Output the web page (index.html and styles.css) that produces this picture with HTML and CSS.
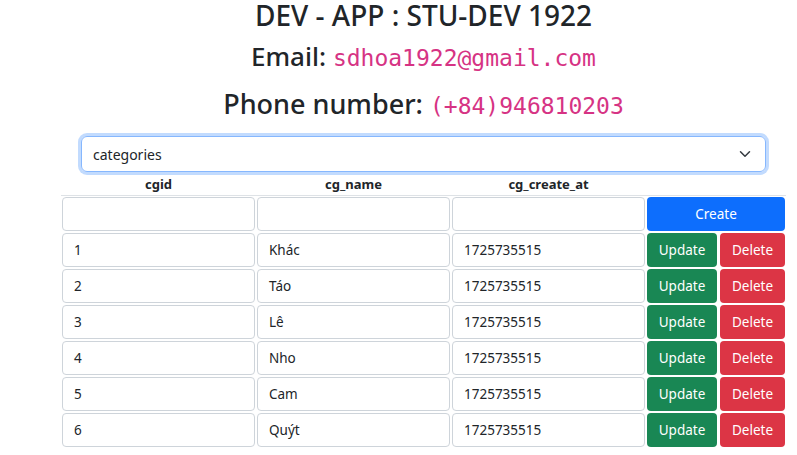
FILE: index.html
```html
<!DOCTYPE html>
<html lang="vi">
<head>
<meta charset="utf-8">
<title>DEV - APP</title>
<link rel="stylesheet" href="styles.css">
</head>
<body>
<div class="page">
  <h2 class="title">DEV - APP : STU-DEV 1922</h2>
  <h3 class="info email">Email: <code>sdhoa1922@gmail.com</code></h3>
  <h2 class="info phone">Phone number: <code>(+84)946810203</code></h2>
  <div class="select">
    <span>categories</span>
    <svg class="chev" width="16" height="12" viewBox="0 0 16 16"><path d="m2 5 6 6 6-6" fill="none" stroke="#343a40" stroke-width="2" stroke-linecap="round" stroke-linejoin="round"/></svg>
  </div>
  <table class="grid">
    <thead>
      <tr><th>cgid</th><th>cg_name</th><th>cg_create_at</th><th></th></tr>
    </thead>
    <tbody>
      <tr>
        <td><div class="field"></div></td>
        <td><div class="field"></div></td>
        <td><div class="field"></div></td>
        <td><div class="actions"><button class="btn create">Create</button></div></td>
      </tr>
      <tr>
        <td><div class="field">1</div></td>
        <td><div class="field">Khác</div></td>
        <td><div class="field">1725735515</div></td>
        <td><div class="actions"><button class="btn update">Update</button><button class="btn delete">Delete</button></div></td>
      </tr>
      <tr>
        <td><div class="field">2</div></td>
        <td><div class="field">Táo</div></td>
        <td><div class="field">1725735515</div></td>
        <td><div class="actions"><button class="btn update">Update</button><button class="btn delete">Delete</button></div></td>
      </tr>
      <tr>
        <td><div class="field">3</div></td>
        <td><div class="field">Lê</div></td>
        <td><div class="field">1725735515</div></td>
        <td><div class="actions"><button class="btn update">Update</button><button class="btn delete">Delete</button></div></td>
      </tr>
      <tr>
        <td><div class="field">4</div></td>
        <td><div class="field">Nho</div></td>
        <td><div class="field">1725735515</div></td>
        <td><div class="actions"><button class="btn update">Update</button><button class="btn delete">Delete</button></div></td>
      </tr>
      <tr>
        <td><div class="field">5</div></td>
        <td><div class="field">Cam</div></td>
        <td><div class="field">1725735515</div></td>
        <td><div class="actions"><button class="btn update">Update</button><button class="btn delete">Delete</button></div></td>
      </tr>
      <tr>
        <td><div class="field">6</div></td>
        <td><div class="field">Quýt</div></td>
        <td><div class="field">1725735515</div></td>
        <td><div class="actions"><button class="btn update">Update</button><button class="btn delete">Delete</button></div></td>
      </tr>
    </tbody>
  </table>
</div>
</body>
</html>
```
FILE: styles.css
```css
html, body {
  margin: 0;
  padding: 0;
  background: #fff;
}
body {
  font-family: "Noto Sans", "Open Sans", sans-serif;
  color: #212529;
  overflow: hidden;
}
.page {
  padding-left: 50px;
  padding-top: 1px;
}
.title {
  margin: 0;
  text-align: center;
  font-size: 28px;
  font-weight: 500;
  line-height: 28px;
}
.info {
  margin: 0;
  text-align: center;
  font-weight: 500;
}
.email {
  font-size: 26px;
  line-height: 30px;
  margin-top: 12px;
}
.phone {
  font-size: 27px;
  line-height: 34px;
  margin-top: 14px;
}
code {
  font-family: "DejaVu Sans Mono", monospace;
  font-size: 23px;
  font-weight: 400;
  color: #d63384;
}
.select {
  box-sizing: border-box;
  width: 685px;
  height: 36px;
  margin: 13px auto 0;
  border: 1px solid #86b7fe;
  border-radius: 6px;
  box-shadow: 0 0 0 3px rgba(13, 110, 253, 0.25);
  display: flex;
  align-items: center;
  justify-content: space-between;
  padding: 0 12px 0 11px;
  font-size: 14px;
}
.grid {
  width: 725px;
  margin: 0 auto;
  border-collapse: separate;
  border-spacing: 0;
  font-size: 14px;
}
.grid th {
  font-weight: 700;
  font-size: 13px;
  height: 23px;
  padding: 0;
  border-bottom: 1px solid #dee2e6;
  text-align: center;
  vertical-align: middle;
}
.grid th:nth-child(1),
.grid th:nth-child(2),
.grid th:nth-child(3) {
  width: 195px;
}
.grid td {
  padding: 1px;
}
.field {
  box-sizing: border-box;
  height: 34px;
  border: 1px solid #ced4da;
  border-radius: 4px;
  padding: 0 11px;
  display: flex;
  align-items: center;
  font-size: 13.5px;
}
.actions {
  display: flex;
  gap: 3px;
}
.btn {
  height: 34px;
  border: none;
  border-radius: 4px;
  color: #fff;
  font-family: inherit;
  font-size: 13.5px;
  padding: 0;
  cursor: pointer;
}
.create {
  flex: 1;
  background: #0d6efd;
}
.update {
  width: 70px;
  background: #198754;
}
.delete {
  flex: 1;
  background: #dc3545;
}
```
